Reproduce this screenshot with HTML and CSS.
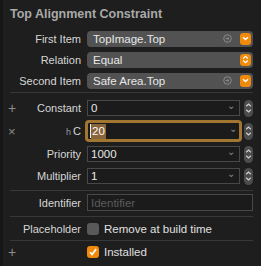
FILE: index.html
```html
<!DOCTYPE html>
<html lang="en">
<head>
    <meta charset="UTF-8">
    <title>Top Alignment Constraint</title>
    <link rel="stylesheet" href="styles.css">
</head>
<body>
    <div class="panel">
        <div class="title">Top Alignment Constraint</div>

        <div class="row">
            <span class="gutter"></span>
            <label class="label">First Item</label>
            <div class="popup">
                <span class="value">TopImage.Top</span>
                <svg class="goto" width="9" height="9" viewBox="0 0 9 9"><circle cx="4.5" cy="4.5" r="3.8" fill="none" stroke="#8a8a8a" stroke-width="1"/><path d="M2.5 4.5h3.2M4.4 3l1.6 1.5-1.6 1.5" fill="none" stroke="#8a8a8a" stroke-width="1"/></svg>
                <span class="pick"><svg width="7" height="5" viewBox="0 0 7 5"><path d="M1 1.2l2.5 2.4L6 1.2" fill="none" stroke="#fff" stroke-width="1.4"/></svg></span>
            </div>
        </div>
        <div class="row">
            <span class="gutter"></span>
            <label class="label">Relation</label>
            <div class="popup">
                <span class="value">Equal</span>
                <span class="pick"><svg width="7" height="9" viewBox="0 0 7 9"><path d="M1.2 3.4l2.3-2.1 2.3 2.1M1.2 5.6l2.3 2.1 2.3-2.1" fill="none" stroke="#fff" stroke-width="1.3"/></svg></span>
            </div>
        </div>
        <div class="row">
            <span class="gutter"></span>
            <label class="label">Second Item</label>
            <div class="popup">
                <span class="value">Safe Area.Top</span>
                <svg class="goto" width="9" height="9" viewBox="0 0 9 9"><circle cx="4.5" cy="4.5" r="3.8" fill="none" stroke="#8a8a8a" stroke-width="1"/><path d="M2.5 4.5h3.2M4.4 3l1.6 1.5-1.6 1.5" fill="none" stroke="#8a8a8a" stroke-width="1"/></svg>
                <span class="pick"><svg width="7" height="5" viewBox="0 0 7 5"><path d="M1 1.2l2.5 2.4L6 1.2" fill="none" stroke="#fff" stroke-width="1.4"/></svg></span>
            </div>
        </div>

        <div class="sep sep-1"></div>

        <div class="row row-field">
            <span class="gutter">+</span>
            <label class="label">Constant</label>
            <div class="field"><span class="value">0</span><span class="chev">&#8964;</span></div>
            <span class="stepper"><svg width="7" height="12" viewBox="0 0 7 12"><path d="M1.2 4.3l2.3-2.2 2.3 2.2M1.2 7.7l2.3 2.2 2.3-2.2" fill="none" stroke="#d0d0d0" stroke-width="1.2"/></svg></span>
        </div>
        <div class="row row-focus">
            <span class="gutter gutter-x">&times;</span>
            <label class="label"><span class="size">h</span>C</label>
            <div class="field field-focus"><span class="caret"></span><span class="value selected">20</span><span class="chev">&#8964;</span></div>
            <span class="stepper"><svg width="7" height="12" viewBox="0 0 7 12"><path d="M1.2 4.3l2.3-2.2 2.3 2.2M1.2 7.7l2.3 2.2 2.3-2.2" fill="none" stroke="#d0d0d0" stroke-width="1.2"/></svg></span>
        </div>
        <div class="row row-field">
            <span class="gutter"></span>
            <label class="label">Priority</label>
            <div class="field"><span class="value">1000</span><span class="chev">&#8964;</span></div>
            <span class="stepper"><svg width="7" height="12" viewBox="0 0 7 12"><path d="M1.2 4.3l2.3-2.2 2.3 2.2M1.2 7.7l2.3 2.2 2.3-2.2" fill="none" stroke="#d0d0d0" stroke-width="1.2"/></svg></span>
        </div>
        <div class="row row-field">
            <span class="gutter"></span>
            <label class="label">Multiplier</label>
            <div class="field"><span class="value">1</span><span class="chev">&#8964;</span></div>
            <span class="stepper"><svg width="7" height="12" viewBox="0 0 7 12"><path d="M1.2 4.3l2.3-2.2 2.3 2.2M1.2 7.7l2.3 2.2 2.3-2.2" fill="none" stroke="#d0d0d0" stroke-width="1.2"/></svg></span>
        </div>

        <div class="sep sep-2"></div>

        <div class="row row-field row-ident">
            <span class="gutter"></span>
            <label class="label">Identifier</label>
            <div class="field field-wide"><span class="value placeholder">Identifier</span></div>
        </div>

        <div class="sep sep-3"></div>

        <div class="row row-check">
            <span class="gutter"></span>
            <label class="label">Placeholder</label>
            <span class="checkbox"></span>
            <span class="check-text">Remove at build time</span>
        </div>

        <div class="sep sep-4"></div>

        <div class="row row-check row-last">
            <span class="gutter">+</span>
            <span class="label"></span>
            <span class="checkbox checked"><svg width="10" height="10" viewBox="0 0 10 10"><path d="M2 5.2l2.1 2.3L8.2 2" fill="none" stroke="#fff" stroke-width="1.7"/></svg></span>
            <span class="check-text">Installed</span>
        </div>
    </div>
</body>
</html>
```

FILE: styles.css
```css
body {
    margin: 0;
    background: #1e1e1e;
    font-family: "Liberation Sans", Arial, sans-serif;
    font-size: 11px;
    color: #d6d6d6;
}
.panel {
    width: 261px;
    height: 266px;
    border-left: 3px solid #161616;
    box-sizing: border-box;
}
.title {
    height: 28px;
    padding-left: 7px;
    line-height: 28px;
    font-size: 12.5px;
    font-weight: 700;
    color: #a9a9a9;
}
.row {
    display: flex;
    align-items: center;
    height: 21px;
    padding-right: 8px;
}
.gutter {
    width: 14px;
    flex: none;
    padding-left: 5px;
    box-sizing: border-box;
    color: #8c8c8c;
    font-size: 14px;
}
.gutter-x {
    font-size: 13px;
}
.label {
    width: 64px;
    flex: none;
    text-align: right;
    margin-right: 6px;
    white-space: nowrap;
}
.size {
    font-size: 9px;
    color: #9a9a9a;
    margin-right: 2px;
}
.popup {
    flex: 1;
    display: flex;
    align-items: center;
    height: 16px;
    background: #525252;
    border-radius: 4px;
    padding: 0 2px 0 6px;
    color: #e8e8e8;
    font-size: 11.5px;
}
.popup .value {
    flex: 1;
}
.goto {
    margin-right: 8px;
}
.pick {
    width: 11px;
    height: 12px;
    border-radius: 3px;
    background: #f08a0a;
    display: flex;
    align-items: center;
    justify-content: center;
}
.sep {
    height: 1px;
    margin: 0 8px 0 7px;
    background: #383838;
}
.sep-1 {
    margin-top: 1px;
    margin-bottom: 4px;
}
.sep-2 {
    margin-top: 3px;
}
.sep-3 {
    margin-top: 2px;
}
.row-field {
    height: 22px;
}
.row-focus {
    height: 24px;
}
.field {
    flex: 1;
    display: flex;
    align-items: center;
    height: 16px;
    border: 1px solid #484848;
    background: #1b1b1b;
    box-sizing: border-box;
    padding: 0 4px 0 3px;
    color: #e8e8e8;
    font-size: 11.5px;
}
.field .value {
    flex: 1;
}
.field-focus {
    height: 22px;
    border: 3px solid #a17631;
    border-radius: 4px;
    margin-left: -2px;
    margin-right: -2px;
    padding-left: 2px;
    padding-right: 2px;
}
.field-focus .value {
    flex: none;
}
.field-focus .chev {
    margin-left: auto;
}
.selected {
    background: #8a653a;
    color: #fff;
    padding: 0 1px;
    line-height: 15px;
}
.caret {
    width: 1px;
    height: 14px;
    background: #f0f0f0;
}
.chev {
    color: #8a8a8a;
    font-size: 10px;
    line-height: 10px;
    margin-top: -5px;
}
.stepper {
    width: 9px;
    height: 17px;
    margin-left: 4px;
    border-radius: 4.5px;
    background: #4c4c4c;
    display: flex;
    align-items: center;
    justify-content: center;
}
.row-ident {
    height: 23px;
}
.field-wide {
    height: 17px;
}
.placeholder {
    color: #5c5c5c;
}
.row-check {
    height: 23px;
}
.row-last {
    height: 21px;
}
.checkbox {
    width: 12px;
    height: 12px;
    border-radius: 3px;
    background: #595959;
    display: flex;
    align-items: center;
    justify-content: center;
    flex: none;
}
.checkbox.checked {
    background: #f08a0a;
}
.check-text {
    margin-left: 5px;
    font-size: 11.5px;
    color: #e0e0e0;
}
```
